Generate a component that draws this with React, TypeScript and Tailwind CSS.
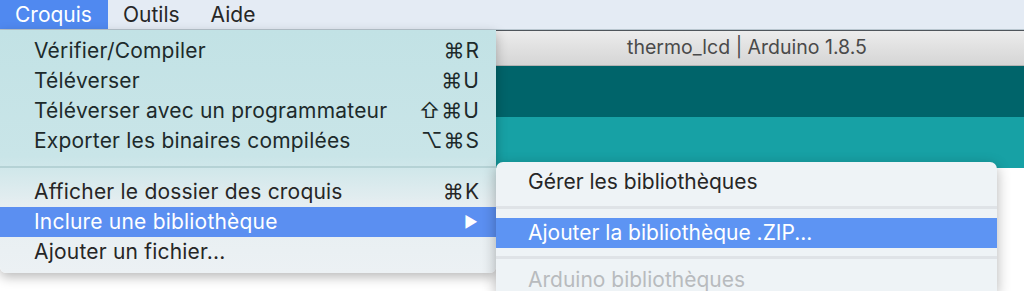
import React from 'react';

const font = { fontFamily: 'Inter, "Noto Sans", "Liberation Sans", sans-serif' };

type Item = { label: string; shortcut?: string; active?: boolean; arrow?: boolean; disabled?: boolean };

function MenuRow({ item, light }: { item: Item; light?: boolean }) {
  return (
    <div
      className={
        'flex h-[30px] items-center justify-between pl-[34px] pr-[16px] text-[21px] tracking-[0.2px] ' +
        (item.active ? 'bg-[#5b8ff1] text-white' : light ? 'text-[#262626]' : 'text-[#1d2a2b]')
      }
    >
      <span>{item.label}</span>
      {item.shortcut && <span className="tracking-[1px]">{item.shortcut}</span>}
      {item.arrow && <span className="mr-[2px] text-[15px]">▶</span>}
    </div>
  );
}

export default function App() {
  const top: Item[] = [
    { label: 'Vérifier/Compiler', shortcut: '⌘R' },
    { label: 'Téléverser', shortcut: '⌘U' },
    { label: 'Téléverser avec un programmateur', shortcut: '⇧⌘U' },
    { label: 'Exporter les binaires compilées', shortcut: '⌥⌘S' },
  ];
  const bottom: Item[] = [
    { label: 'Afficher le dossier des croquis', shortcut: '⌘K' },
    { label: 'Inclure une bibliothèque', active: true, arrow: true },
    { label: 'Ajouter un fichier...' },
  ];

  return (
    <div className="relative h-[291px] w-[1024px] overflow-hidden bg-white" style={font}>
      {/* menu bar */}
      <div className="flex h-[30px] items-stretch border-b border-[#b9c6cf] bg-[#e4ebf4] text-[21px] text-[#262626]">
        <div className="flex w-[108px] items-center bg-[#5089f0] pl-[15px] text-white">Croquis</div>
        <div className="flex items-center pl-[15px]">Outils</div>
        <div className="flex items-center pl-[31px]">Aide</div>
      </div>

      {/* Arduino window */}
      <div className="flex flex-col">
        <div className="flex h-[36px] items-center border-t border-[#4f555b] border-b border-b-[#b3b3b3] bg-[linear-gradient(180deg,#ececec,#d5d5d5)] pl-[470px]">
          <div className="flex-1 text-center text-[19.5px] text-[#4a4a4a]">thermo_lcd | Arduino 1.8.5</div>
        </div>
        <div className="h-[51px] bg-[#00646a]" />
        <div className="h-[51px] bg-[#17a1a5]" />
      </div>

      {/* Croquis menu */}
      <div className="absolute left-0 top-[30px] w-[496px] rounded-b-[6px] bg-[linear-gradient(180deg,#c2e2e5_0%,#c9e5e8_52%,#e6eef1_72%,#ecf1f4_100%)] pb-[6px] pt-[6px] shadow-[0_4px_12px_rgba(0,0,0,0.28)]">
        {top.map((it) => (
          <MenuRow key={it.label} item={it} />
        ))}
        <div className="flex h-[21px] items-center">
          <div className="h-[2px] w-full bg-[#b5d2d5]" />
        </div>
        {bottom.map((it) => (
          <MenuRow key={it.label} item={it} light />
        ))}
      </div>

      {/* Submenu */}
      <div className="absolute left-[496px] top-[162px] w-[501px] rounded-t-[7px] bg-[#eef3f6] pt-[5px] text-[21px] shadow-[0_4px_14px_rgba(0,0,0,0.3)]">
        <div className="flex h-[30px] items-center pl-[32px] text-[#262626]">Gérer les bibliothèques</div>
        <div className="flex h-[21px] items-center">
          <div className="h-[3px] w-full bg-[#dfe3e7]" />
        </div>
        <div className="flex h-[30px] items-center bg-[#5d94f3] pl-[32px] text-white">Ajouter la bibliothèque .ZIP...</div>
        <div className="flex h-[18px] items-center">
          <div className="h-[3px] w-full bg-[#dfe3e7]" />
        </div>
        <div className="flex h-[26px] items-start pl-[32px] pt-[2px] leading-[24px] text-[#b8bbbe]">Arduino bibliothèques</div>
      </div>
    </div>
  );
}
